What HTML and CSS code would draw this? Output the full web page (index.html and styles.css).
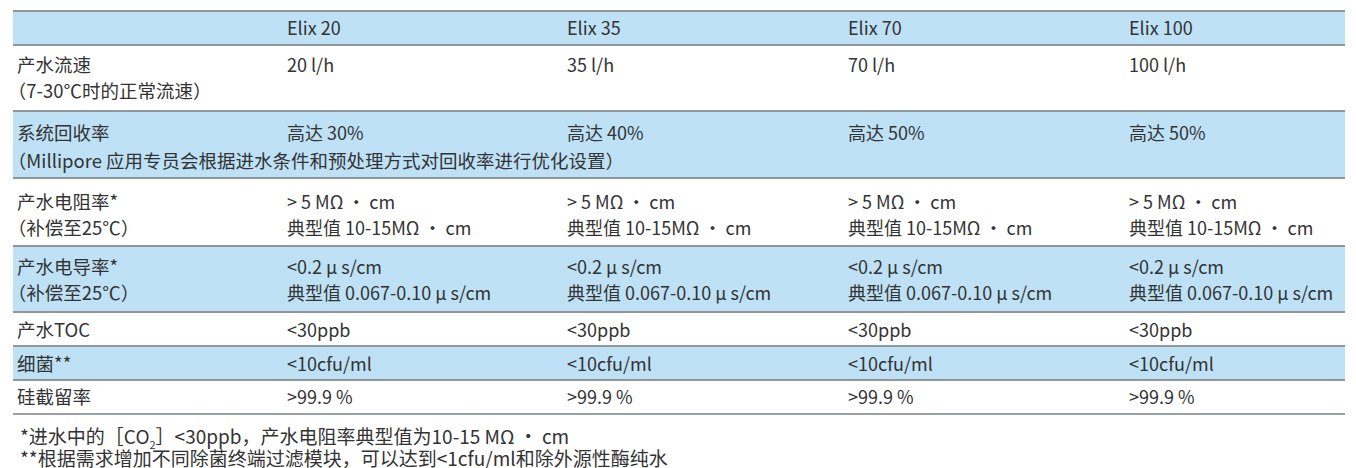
FILE: index.html
```html
<!DOCTYPE html>
<html lang="zh-CN">
<head>
<meta charset="utf-8">
<title>Elix 规格</title>
<link rel="stylesheet" href="styles.css">
</head>
<body>
<div class="spec">
  <div class="row blue head">
    <div class="cell label"></div>
    <div class="cell">Elix 20</div>
    <div class="cell">Elix 35</div>
    <div class="cell">Elix 70</div>
    <div class="cell">Elix 100</div>
  </div>
  <div class="row two flow">
    <div class="cell label">产水流速<br><span class="lp">（</span>7-30℃时的正常流速）</div>
    <div class="cell">20 l/h</div>
    <div class="cell">35 l/h</div>
    <div class="cell">70 l/h</div>
    <div class="cell">100 l/h</div>
  </div>
  <div class="row blue recovery">
    <div class="cell label">系统回收率</div>
    <div class="cell">高达 30%</div>
    <div class="cell">高达 40%</div>
    <div class="cell">高达 50%</div>
    <div class="cell">高达 50%</div>
    <div class="cell label span"><span class="lp">（</span>Millipore 应用专员会根据进水条件和预处理方式对回收率进行优化设置）</div>
  </div>
  <div class="row two resist">
    <div class="cell label">产水电阻率*<br><span class="lp">（</span>补偿至25℃）</div>
    <div class="cell">&gt; 5 MΩ · cm<br>典型值 10-15MΩ · cm</div>
    <div class="cell">&gt; 5 MΩ · cm<br>典型值 10-15MΩ · cm</div>
    <div class="cell">&gt; 5 MΩ · cm<br>典型值 10-15MΩ · cm</div>
    <div class="cell">&gt; 5 MΩ · cm<br>典型值 10-15MΩ · cm</div>
  </div>
  <div class="row blue two cond">
    <div class="cell label">产水电导率*<br><span class="lp">（</span>补偿至25℃）</div>
    <div class="cell">&lt;0.2 μ s/cm<br>典型值 0.067-0.10 μ s/cm</div>
    <div class="cell">&lt;0.2 μ s/cm<br>典型值 0.067-0.10 μ s/cm</div>
    <div class="cell">&lt;0.2 μ s/cm<br>典型值 0.067-0.10 μ s/cm</div>
    <div class="cell">&lt;0.2 μ s/cm<br>典型值 0.067-0.10 μ s/cm</div>
  </div>
  <div class="row one">
    <div class="cell label">产水TOC</div>
    <div class="cell">&lt;30ppb</div>
    <div class="cell">&lt;30ppb</div>
    <div class="cell">&lt;30ppb</div>
    <div class="cell">&lt;30ppb</div>
  </div>
  <div class="row blue one">
    <div class="cell label">细菌**</div>
    <div class="cell">&lt;10cfu/ml</div>
    <div class="cell">&lt;10cfu/ml</div>
    <div class="cell">&lt;10cfu/ml</div>
    <div class="cell">&lt;10cfu/ml</div>
  </div>
  <div class="row one last">
    <div class="cell label">硅截留率</div>
    <div class="cell">&gt;99.9 %</div>
    <div class="cell">&gt;99.9 %</div>
    <div class="cell">&gt;99.9 %</div>
    <div class="cell">&gt;99.9 %</div>
  </div>
</div>
<div class="notes">
  <p>*进水中的［CO<sub>2</sub>］&lt;30ppb，产水电阻率典型值为10-15 MΩ · cm</p>
  <p>**根据需求增加不同除菌终端过滤模块，可以达到&lt;1cfu/ml和除外源性酶纯水</p>
</div>
</body>
</html>
```
FILE: styles.css
```css
html, body {
  margin: 0;
  padding: 0;
  background: #ffffff;
}

body {
  font-family: "Noto Sans CJK SC", "Noto Sans", sans-serif;
  font-size: 18px;
  color: #333333;
}

.spec {
  width: 1332px;
  margin: 10px 0 0 13px;
  border-bottom: 2px solid #9aa1a6;
}

.row {
  display: grid;
  grid-template-columns: 270px 280px 281px 281px 220px;
  border-top: 2px solid #8f979d;
  line-height: 26px;
  white-space: nowrap;
}

.blue {
  background: #bee1f6;
}

.cell {
  padding: 0 4px;
  font-size: 18px;
}

.label {
  font-size: 18.5px;
}

.head { padding: 2px 0 4px; }
.flow { padding: 5px 0 7px; }
.recovery { padding: 7px 0 4px; }
.resist { padding: 9px 0 5px; }
.cond { padding: 6px 0 6px; }
.one { padding: 3px 0 3px; }
.last { padding: 2px 0 4px; }

.span {
  grid-column: 1 / -1;
  margin-top: 2px;
}

.lp {
  font-feature-settings: "halt";
}

.notes {
  margin: 10px 0 0 20px;
  font-size: 19px;
  line-height: 22px;
}

.notes p {
  margin: 0;
}

.notes sub {
  font-size: 11px;
  line-height: 0;
}
```
